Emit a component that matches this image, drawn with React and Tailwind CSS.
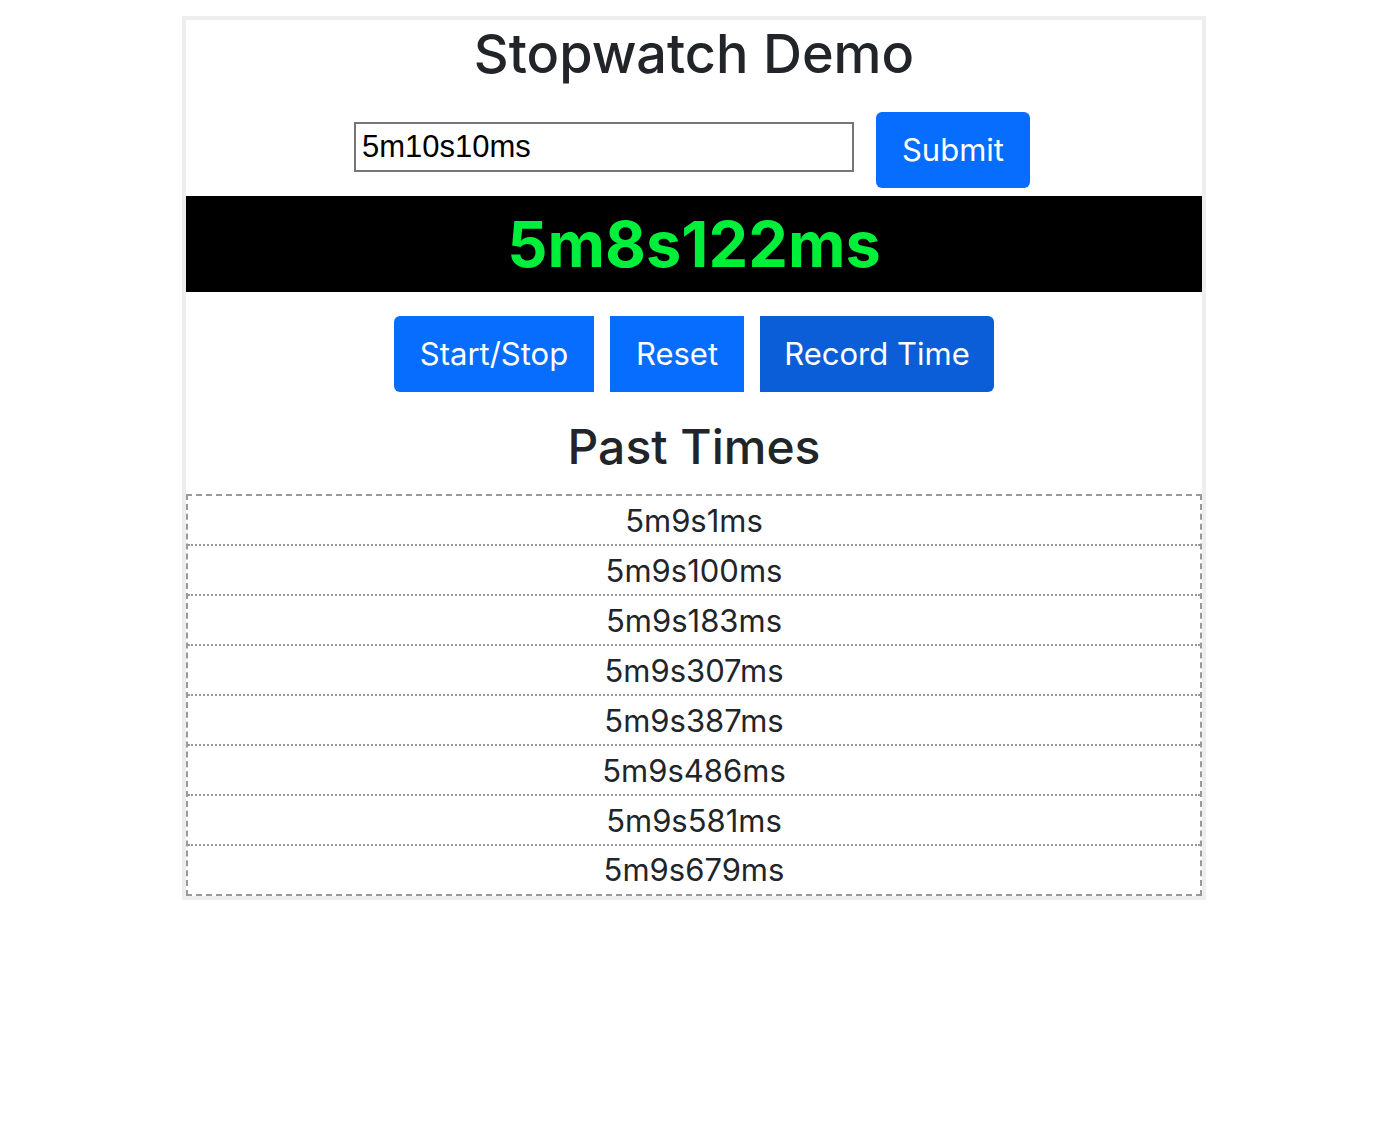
import React, { useState } from 'react';

const pastTimes = [
    '5m9s1ms',
    '5m9s100ms',
    '5m9s183ms',
    '5m9s307ms',
    '5m9s387ms',
    '5m9s486ms',
    '5m9s581ms',
    '5m9s679ms',
];

function App() {
    const [value, setValue] = useState('5m10s10ms');

    return (
        <div className="min-h-screen bg-white" style={{ fontFamily: 'Inter, "Noto Sans", sans-serif' }}>
            <div className="pt-4">
                <div className="ml-[182px] w-[1024px] border-4 border-[#eeeeee] text-[#212529]">
                    <h1 className="h-[92px] pt-[2px] text-center text-[54px] font-medium leading-[1.2]">
                        Stopwatch Demo
                    </h1>
                    <div className="flex justify-center items-start gap-[22px] pr-[4px]">
                        <input
                            type="text"
                            value={value}
                            onChange={(e) => setValue(e.target.value)}
                            className="mt-[10px] w-[500px] h-[50px] border-2 border-[#767676] px-[6px] text-[31px] text-black outline-none"
                            style={{ fontFamily: '"Liberation Sans", Arial, sans-serif' }}
                        />
                        <button className="w-[154px] h-[76px] rounded-[6px] bg-[#066dfe] text-white text-[31px]">
                            Submit
                        </button>
                    </div>
                    <div className="mt-2 h-24 bg-black flex items-center justify-center">
                        <span className="text-[63px] font-bold text-[#00ef3a]">5m8s122ms</span>
                    </div>
                    <div className="mt-6 flex justify-center gap-4">
                        <button className="w-[200px] h-[76px] rounded-l-[6px] bg-[#066dfe] text-white text-[31px]">
                            Start/Stop
                        </button>
                        <button className="w-[134px] h-[76px] bg-[#066dfe] text-white text-[31px]">
                            Reset
                        </button>
                        <button className="w-[234px] h-[76px] rounded-r-[6px] bg-[#0b5ed7] text-white text-[31px]">
                            Record Time
                        </button>
                    </div>
                    <h2 className="h-[102px] pt-[26px] text-center text-[48px] font-medium leading-[1.2]">
                        Past Times
                    </h2>
                    <ul className="border-2 border-dashed border-[#999999]">
                        {pastTimes.map((t, i) => (
                            <li
                                key={t}
                                className={
                                    'flex items-center justify-center text-[31px] ' +
                                    (i < pastTimes.length - 1 ? 'h-[50px] pt-[2px] border-b-2 border-dotted border-[#999999]' : 'h-12')
                                }
                            >
                                {t}
                            </li>
                        ))}
                    </ul>
                </div>
            </div>
        </div>
    );
}

export default App;
